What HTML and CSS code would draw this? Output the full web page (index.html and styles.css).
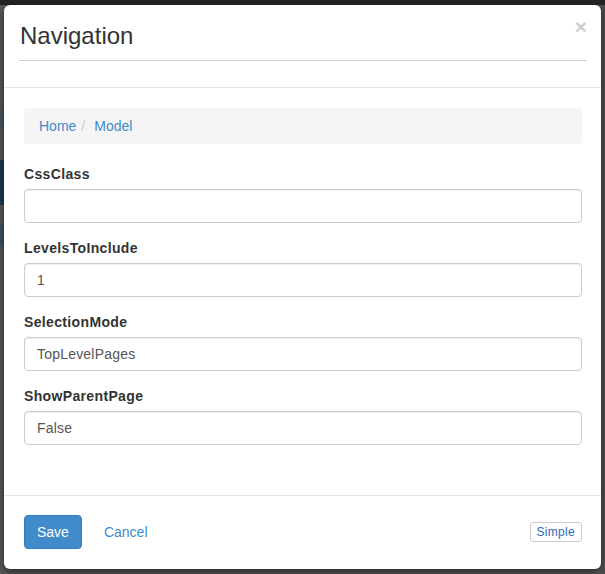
FILE: index.html
```html
<!DOCTYPE html>
<html>
<head>
<meta charset="utf-8">
<link rel="stylesheet" href="styles.css">
</head>
<body>
<div class="backdrop">
  <div class="topbar"></div>
</div>
<div class="stage">
  <div class="modal">
    <div class="modal-header">
      <h3 class="modal-title">Navigation</h3>
      <button class="close" type="button">×</button>
    </div>
    <div class="modal-body">
      <ol class="breadcrumb">
        <li><a href="#">Home</a></li>
        <li class="sep">/</li>
        <li><a href="#">Model</a></li>
      </ol>
      <div class="form-group">
        <label class="label">CssClass</label>
        <div class="input"></div>
      </div>
      <div class="form-group">
        <label class="label">LevelsToInclude</label>
        <div class="input">1</div>
      </div>
      <div class="form-group">
        <label class="label">SelectionMode</label>
        <div class="input">TopLevelPages</div>
      </div>
      <div class="form-group">
        <label class="label">ShowParentPage</label>
        <div class="input">False</div>
      </div>
    </div>
    <div class="modal-footer">
      <div class="actions">
        <button class="btn btn-primary" type="button">Save</button>
        <button class="btn btn-link" type="button">Cancel</button>
      </div>
      <button class="btn-xs" type="button">Simple</button>
    </div>
  </div>
</div>
</body>
</html>
```
FILE: styles.css
```css
html, body {
  margin: 0;
  padding: 0;
  height: 100%;
}
body {
  font-family: "Liberation Sans", Arial, sans-serif;
  font-size: 14px;
  line-height: 20px;
  color: #333;
  background:
    linear-gradient(to bottom,
      #242424 0, #242424 5px,
      #585858 5px, #585858 108px,
      #4c5662 108px, #4c5662 130px,
      #585858 130px, #585858 160px,
      #1d3a56 160px, #1d3a56 205px,
      #585858 205px, #585858 225px,
      #3f5263 225px, #3f5263 246px,
      #585858 246px) left top / 4px 100% no-repeat,
    linear-gradient(to bottom, #242424 0, #242424 5px, #4f4f4f 5px) right top / 4px 100% no-repeat,
    #585858;
  overflow: hidden;
}
.backdrop {
  position: absolute;
  left: 0;
  top: 0;
  width: 100%;
  height: 5px;
}
.topbar {
  height: 5px;
  background: #242424;
}
.stage {
  position: relative;
  padding: 5px 0 0 4px;
}
.modal {
  width: 597px;
  box-sizing: border-box;
  background: #fff;
  border-radius: 6px;
  box-shadow: 0 3px 8px rgba(0, 0, 0, 0.55);
  position: relative;
}
.modal-header {
  position: relative;
  padding: 18px 14px 0 15px;
  border-bottom: 1px solid #e5e5e5;
}
.modal-title {
  margin: 0 0 26px 0;
  font-size: 24px;
  line-height: 26px;
  font-weight: normal;
  color: #333;
  padding: 0 0 11px 1px;
  border-bottom: 1px solid #cfcfcf;
}
.close {
  position: absolute;
  right: 14px;
  top: 11px;
  border: 0;
  background: none;
  padding: 0;
  font-family: "Liberation Sans", Arial, sans-serif;
  font-size: 21px;
  font-weight: bold;
  line-height: 21px;
  color: #cfcfcf;
}
.modal-body {
  padding: 20px 19px 35px 20px;
}
.breadcrumb {
  list-style: none;
  margin: 0 0 20px 0;
  padding: 8px 15px;
  background: #f5f5f5;
  border-radius: 4px;
  display: flex;
}
.breadcrumb a {
  color: #428bca;
  text-decoration: none;
}
.breadcrumb .sep {
  color: #ccc;
  padding: 0 9px 0 5px;
}
.form-group {
  margin-bottom: 15px;
}
.label {
  display: block;
  font-weight: bold;
  margin-bottom: 5px;
  color: #333;
  letter-spacing: 0.35px;
}
.input {
  height: 34px;
  box-sizing: border-box;
  padding: 6px 12px;
  border: 1px solid #ccc;
  border-radius: 4px;
  color: #555;
  letter-spacing: 0.2px;
  box-shadow: inset 0 1px 1px rgba(0, 0, 0, 0.075);
}
.modal-footer {
  border-top: 1px solid #e5e5e5;
  padding: 19px 19px 20px 20px;
  display: flex;
  align-items: center;
  justify-content: space-between;
}
.actions {
  display: flex;
  gap: 9px;
}
.btn {
  font-family: "Liberation Sans", Arial, sans-serif;
  font-size: 14px;
  line-height: 20px;
  padding: 6px 12px;
  border: 1px solid transparent;
  border-radius: 4px;
  background: none;
}
.btn-primary {
  background: #428bca;
  border-color: #357ebd;
  color: #fff;
}
.btn-link {
  color: #428bca;
}
.btn-xs {
  font-family: "Liberation Sans", Arial, sans-serif;
  font-size: 12px;
  line-height: 18px;
  padding: 0 6px;
  border: 1px solid #ccc;
  border-radius: 3px;
  background: #fff;
  color: #2d6cb9;
  letter-spacing: 0.3px;
}
```
